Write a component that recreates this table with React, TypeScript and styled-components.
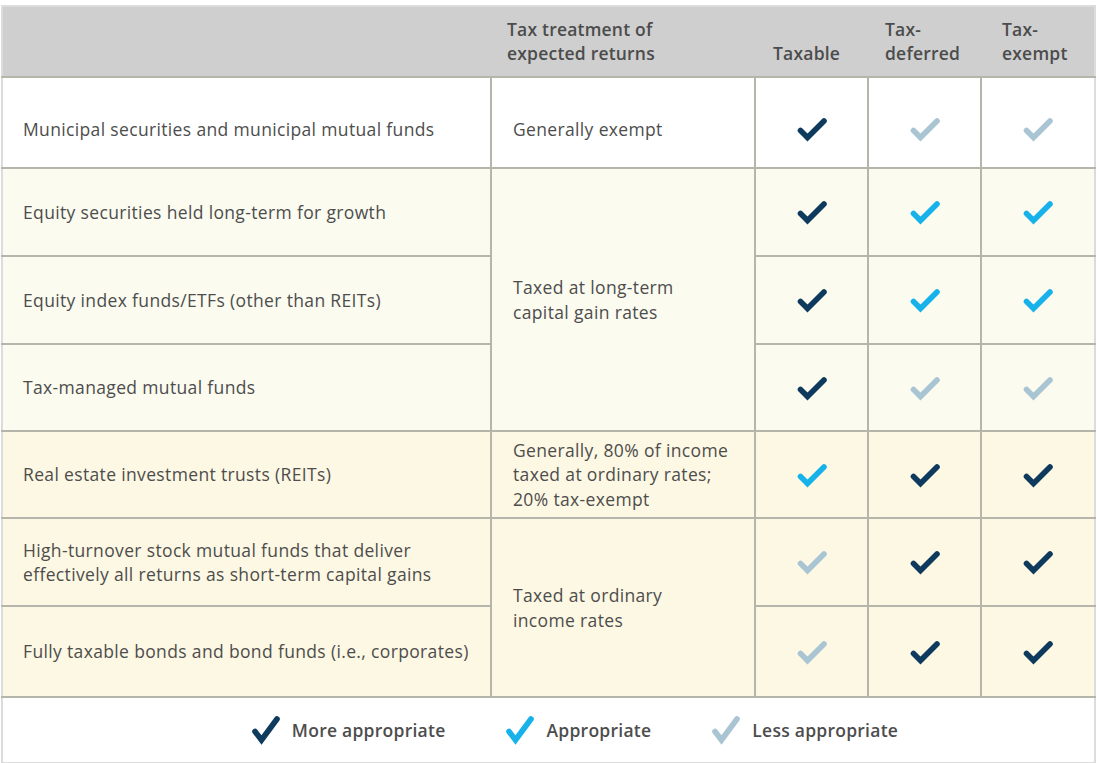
import React from "react";
import styled, { createGlobalStyle } from "styled-components";

const Global = createGlobalStyle`
  html, body { margin: 0; padding: 0; background: #ffffff; }
  body { font-family: "Open Sans", Lato, Arial, sans-serif; color: #4f4f4f; }
`;

type Level = "more" | "ok" | "less";

const COLORS: Record<Level, string> = {
  more: "#0e3a5e",
  ok: "#18b2ea",
  less: "#a9c4d2",
};

const Page = styled.div`
  padding: 5px 1px 0 1px;
`;

const Table = styled.table`
  width: 1095px;
  border-collapse: collapse;
  table-layout: fixed;
  border: 2px solid #dcdcdc;
  font-size: 17.5px;
  line-height: 24.5px;
  letter-spacing: 0.35px;
`;

const HeadRow = styled.tr`
  height: 71px;
  background: #cfcfcf;
`;

const HeadCell = styled.th<{ $pad?: number }>`
  padding: 0 0 11px ${(p) => p.$pad ?? 18}px;
  text-align: left;
  vertical-align: bottom;
  font-weight: 600;
  color: #4c4c4c;
  font-size: 17.5px;
  letter-spacing: 0.2px;
  line-height: 24px;
`;

const Row = styled.tr<{ $bg: string; $h: number }>`
  background: ${(p) => p.$bg};
  height: ${(p) => p.$h}px;
`;

const LabelCell = styled.td<{ $top?: number }>`
  padding: ${(p) => p.$top ?? 0}px 0 0 20px;
  border: 2px solid #b5b5ab;
  border-left: none;
  vertical-align: middle;
  color: #4d4d4d;
`;

const TreatmentCell = styled.td<{ $top?: number }>`
  padding: ${(p) => p.$top ?? 0}px 10px 0 21px;
  border: 2px solid #b5b5ab;
  vertical-align: middle;
  color: #4d4d4d;
`;

const CheckCell = styled.td<{ $top?: number }>`
  border: 2px solid #b5b5ab;
  text-align: center;
  vertical-align: middle;
  padding: ${(p) => p.$top ?? 0}px 0 0 0;
  &:last-child { border-right: none; }
`;

const LegendCell = styled.td`
  height: 64px;
  padding: 0;
  border-top: 2px solid #b5b5ab;
`;

const Legend = styled.div`
  display: flex;
  align-items: center;
  justify-content: center;
  gap: 60px;
  padding-left: 52px;
`;

const LegendItem = styled.div`
  display: flex;
  align-items: center;
  gap: 11px;
  font-weight: 600;
  font-size: 17.5px;
  letter-spacing: 0.25px;
  color: #4d4d4d;
`;

const CheckSvg = styled.svg`
  display: inline-block;
  vertical-align: middle;
`;

const Check = ({ level }: { level: Level }) => (
  <CheckSvg width="32" height="28" viewBox="0 0 32 28" aria-hidden>
    <path
      d="M4.5 15.5 L11.5 22.5 L28 6"
      fill="none"
      stroke={COLORS[level]}
      strokeWidth="5.6"
      strokeLinecap="round"
      strokeLinejoin="miter"
    />
  </CheckSvg>
);

const LegendCheck = ({ level }: { level: Level }) => (
  <CheckSvg width="30" height="30" viewBox="0 0 30 30" aria-hidden>
    <path
      d="M4 16.5 L10.5 25 L26 4"
      fill="none"
      stroke={COLORS[level]}
      strokeWidth="5.6"
      strokeLinecap="round"
      strokeLinejoin="miter"
    />
  </CheckSvg>
);

type RowData = {
  label: React.ReactNode;
  treatment?: { text: React.ReactNode; span: number };
  checks: [Level, Level, Level];
  bg: string;
  h: number;
  top?: number;
};

const WHITE = "#ffffff";
const CREAM = "#fbfbf0";
const YELLOW = "#fdf8e3";

const rows: RowData[] = [
  {
    label: "Municipal securities and municipal mutual funds",
    treatment: { text: "Generally exempt", span: 1 },
    checks: ["more", "less", "less"],
    bg: WHITE,
    h: 91,
    top: 13,
  },
  {
    label: "Equity securities held long-term for growth",
    treatment: {
      text: (
        <>
          Taxed at long-term
          <br />
          capital gain rates
        </>
      ),
      span: 3,
    },
    checks: ["more", "ok", "ok"],
    bg: CREAM,
    h: 88,
  },
  {
    label: "Equity index funds/ETFs (other than REITs)",
    checks: ["more", "ok", "ok"],
    bg: CREAM,
    h: 88,
  },
  {
    label: "Tax-managed mutual funds",
    checks: ["more", "less", "less"],
    bg: CREAM,
    h: 87,
  },
  {
    label: "Real estate investment trusts (REITs)",
    treatment: {
      text: (
        <>
          Generally, 80% of income
          <br />
          taxed at ordinary rates;
          <br />
          20% tax-exempt
        </>
      ),
      span: 1,
    },
    checks: ["ok", "more", "more"],
    bg: YELLOW,
    h: 87,
  },
  {
    label: (
      <>
        High-turnover stock mutual funds that deliver
        <br />
        effectively all returns as short-term capital gains
      </>
    ),
    treatment: {
      text: (
        <>
          Taxed at ordinary
          <br />
          income rates
        </>
      ),
      span: 2,
    },
    checks: ["less", "more", "more"],
    bg: YELLOW,
    h: 88,
  },
  {
    label: "Fully taxable bonds and bond funds (i.e., corporates)",
    checks: ["less", "more", "more"],
    bg: YELLOW,
    h: 91,
  },
];

export default function App() {
  return (
    <Page>
      <Global />
      <Table>
        <colgroup>
          <col style={{ width: 489 }} />
          <col style={{ width: 264 }} />
          <col style={{ width: 113 }} />
          <col style={{ width: 113 }} />
          <col style={{ width: 114 }} />
        </colgroup>
        <thead>
          <HeadRow>
            <HeadCell />
            <HeadCell $pad={16}>
              Tax treatment of
              <br />
              expected returns
            </HeadCell>
            <HeadCell>Taxable</HeadCell>
            <HeadCell $pad={17}>
              Tax-
              <br />
              deferred
            </HeadCell>
            <HeadCell $pad={21}>
              Tax-
              <br />
              exempt
            </HeadCell>
          </HeadRow>
        </thead>
        <tbody>
          {rows.map((r, i) => (
            <Row key={i} $bg={r.bg} $h={r.h}>
              <LabelCell $top={r.top}>{r.label}</LabelCell>
              {r.treatment && (
                <TreatmentCell $top={r.top} rowSpan={r.treatment.span}>
                  {r.treatment.text}
                </TreatmentCell>
              )}
              {r.checks.map((c, j) => (
                <CheckCell key={j} $top={r.top}>
                  <Check level={c} />
                </CheckCell>
              ))}
            </Row>
          ))}
          <tr>
            <LegendCell colSpan={5}>
              <Legend>
                <LegendItem>
                  <LegendCheck level="more" />
                  More appropriate
                </LegendItem>
                <LegendItem>
                  <LegendCheck level="ok" />
                  Appropriate
                </LegendItem>
                <LegendItem>
                  <LegendCheck level="less" />
                  Less appropriate
                </LegendItem>
              </Legend>
            </LegendCell>
          </tr>
        </tbody>
      </Table>
    </Page>
  );
}
